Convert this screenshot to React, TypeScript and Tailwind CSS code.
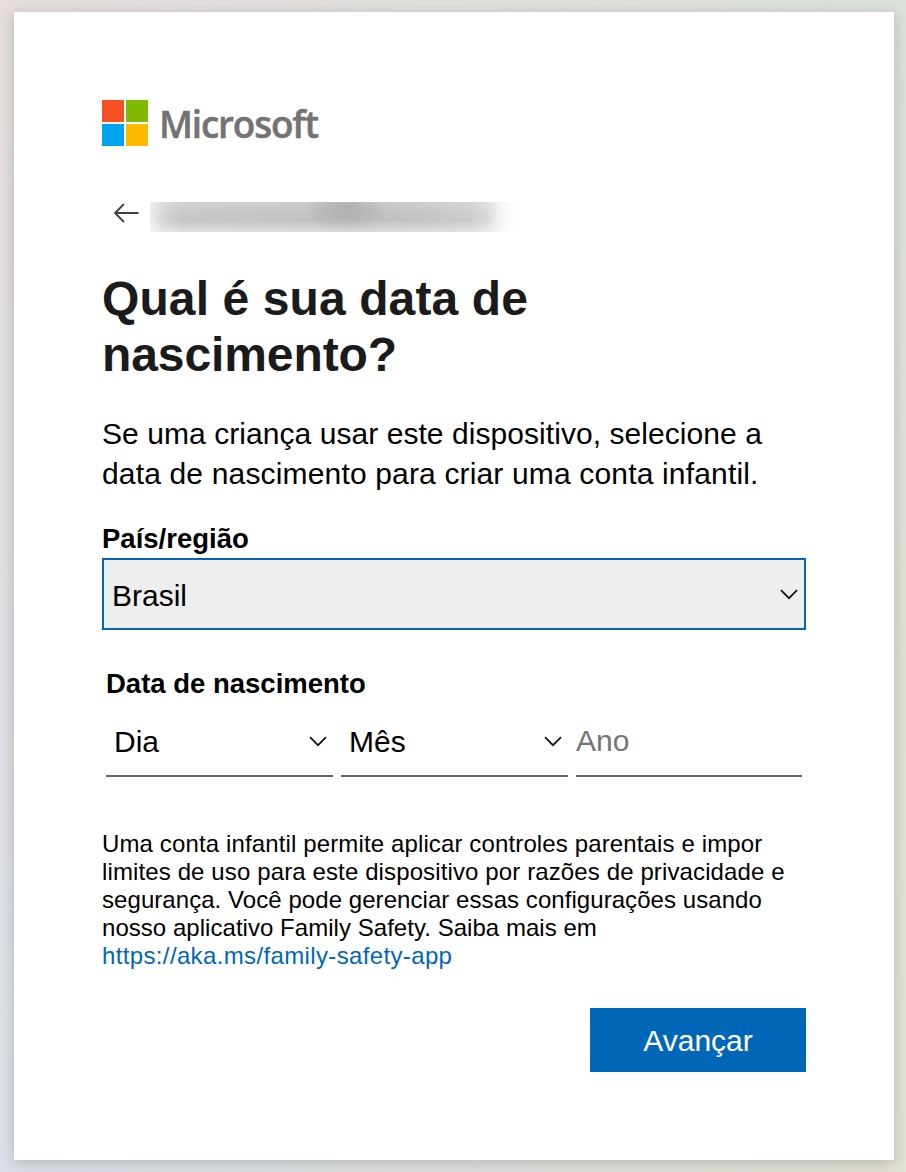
import React from 'react';

function Chevron() {
  return (
    <svg width="18" height="11" viewBox="0 0 18 11" fill="none" className="shrink-0">
      <path d="M1 1.2 9 9.2l8-8" stroke="#111" strokeWidth="1.7" />
    </svg>
  );
}

function Logo() {
  return (
    <div className="flex h-[46px] items-center">
      <svg width="46" height="46" viewBox="0 0 46 46" className="shrink-0">
        <path fill="#f65022" d="M0 0h22v22H0z" />
        <path fill="#7fba00" d="M24 0h22v22H24z" />
        <path fill="#00a4ef" d="M0 24h22v22H0z" />
        <path fill="#ffb900" d="M24 24h22v22H24z" />
      </svg>
      <span className="ml-[11px] origin-left scale-x-[0.97] whitespace-nowrap font-['Open_Sans',sans-serif] text-[38px] leading-[46px] font-semibold tracking-[-1.2px] text-[#737373] [-webkit-text-stroke:0.5px_#737373]">
        Microsoft
      </span>
    </div>
  );
}

function DateSelect({ label }: { label: string }) {
  return (
    <button className="flex h-[72px] w-[226.5px] items-center justify-between border-b-2 border-[#666] pt-[2px] pr-[6px] pl-2 text-left">
      <span>{label}</span>
      <Chevron />
    </button>
  );
}

export default function App() {
  return (
    <div className="h-[1172px] w-[906px] bg-[radial-gradient(ellipse_at_0%_0%,#e5dedc,#e5dedc00_65%),radial-gradient(ellipse_at_100%_0%,#dae0da,#dae0da00_75%),linear-gradient(90deg,#dbe0e8,#e3e1d6)] px-[14px] pt-3 font-['Liberation_Sans',sans-serif]">
      <main className="h-[1148px] w-[880px] bg-white px-[88px] pt-[88px] text-black shadow-[0_3px_14px_rgba(0,0,0,0.19)]">
        <Logo />
        <div className="mt-[56px] flex h-[30px] items-center">
          <svg width="26" height="20" viewBox="0 0 26 20" fill="none" className="-mt-2 ml-[11px] shrink-0">
            <path d="M11 1 2 10l9 9M2 10h23.5" stroke="#404040" strokeWidth="1.8" />
          </svg>
          <div className="ml-[11px] h-[30px] w-[366px] bg-[radial-gradient(ellipse_42px_24px_at_195px_5px,#a5a5a5b0,#a5a5a500),linear-gradient(180deg,#ffffff30,#ffffff00_45%,#ffffff00_60%,#ffffff70),linear-gradient(90deg,#ededed_0%,#d3d3d3_4%,#c7c7c7_9%,#c4c4c4_35%,#bdbdbd_55%,#c3c3c3_72%,#cbcbcb_87%,#d9d9d9_92%,#f4f4f4_96%,#fff_100%)]" />
        </div>
        <h1 className="mt-[39px] text-[48px] leading-[56px] font-bold whitespace-nowrap text-[#1b1b1b]">
          <span className="tracking-[0.1px]">Qual é sua data de</span>
          <br />
          <span className="tracking-[-0.1px]">nascimento?</span>
        </h1>
        <p className="mt-[31px] text-[30px] leading-[40px] whitespace-nowrap">
          <span className="tracking-[0.06px]">Se uma criança usar este dispositivo, selecione a</span>
          <br />
          <span className="tracking-[0.16px]">data de nascimento para criar uma conta infantil.</span>
        </p>
        <div className="mt-[29px] text-[27.5px] leading-[32px] font-bold">País/região</div>
        <button className="mt-[3px] flex h-[72px] w-[704px] items-center justify-between border-2 border-[#0067b8] bg-[#eee] pr-[6px] pl-2 text-left text-[30px]">
          <span className="pt-[2px]">Brasil</span>
          <Chevron />
        </button>
        <div className="mt-[38px] ml-1 text-[27.5px] leading-[32px] font-bold">Data de nascimento</div>
        <div className="mt-[5px] ml-1 flex gap-[8.5px] text-[30px]">
          <DateSelect label="Dia" />
          <DateSelect label="Mês" />
          <input
            aria-label="Ano"
            placeholder="Ano"
            className="h-[72px] w-[226px] border-b-2 border-[#666] pt-[2px] outline-none placeholder:text-[#757575]"
          />
        </div>
        <p className="mt-[53px] text-[24px] leading-[28px] whitespace-nowrap">
          <span className="tracking-[0.13px]">Uma conta infantil permite aplicar controles parentais e impor</span>
          <br />
          <span className="tracking-[0.12px]">limites de uso para este dispositivo por razões de privacidade e</span>
          <br />
          <span className="tracking-[0.06px]">segurança. Você pode gerenciar essas configurações usando</span>
          <br />
          <span className="tracking-[0.04px]">nosso aplicativo Family Safety. Saiba mais em</span>
          <br />
          <a className="tracking-[0.36px] text-[#0067b8]">https://aka.ms/family-safety-app</a>
        </p>
        <div className="mt-[38px] flex justify-end">
          <button className="h-16 w-[216px] bg-[#0067b8] text-[30px] text-white">Avançar</button>
        </div>
      </main>
    </div>
  );
}
